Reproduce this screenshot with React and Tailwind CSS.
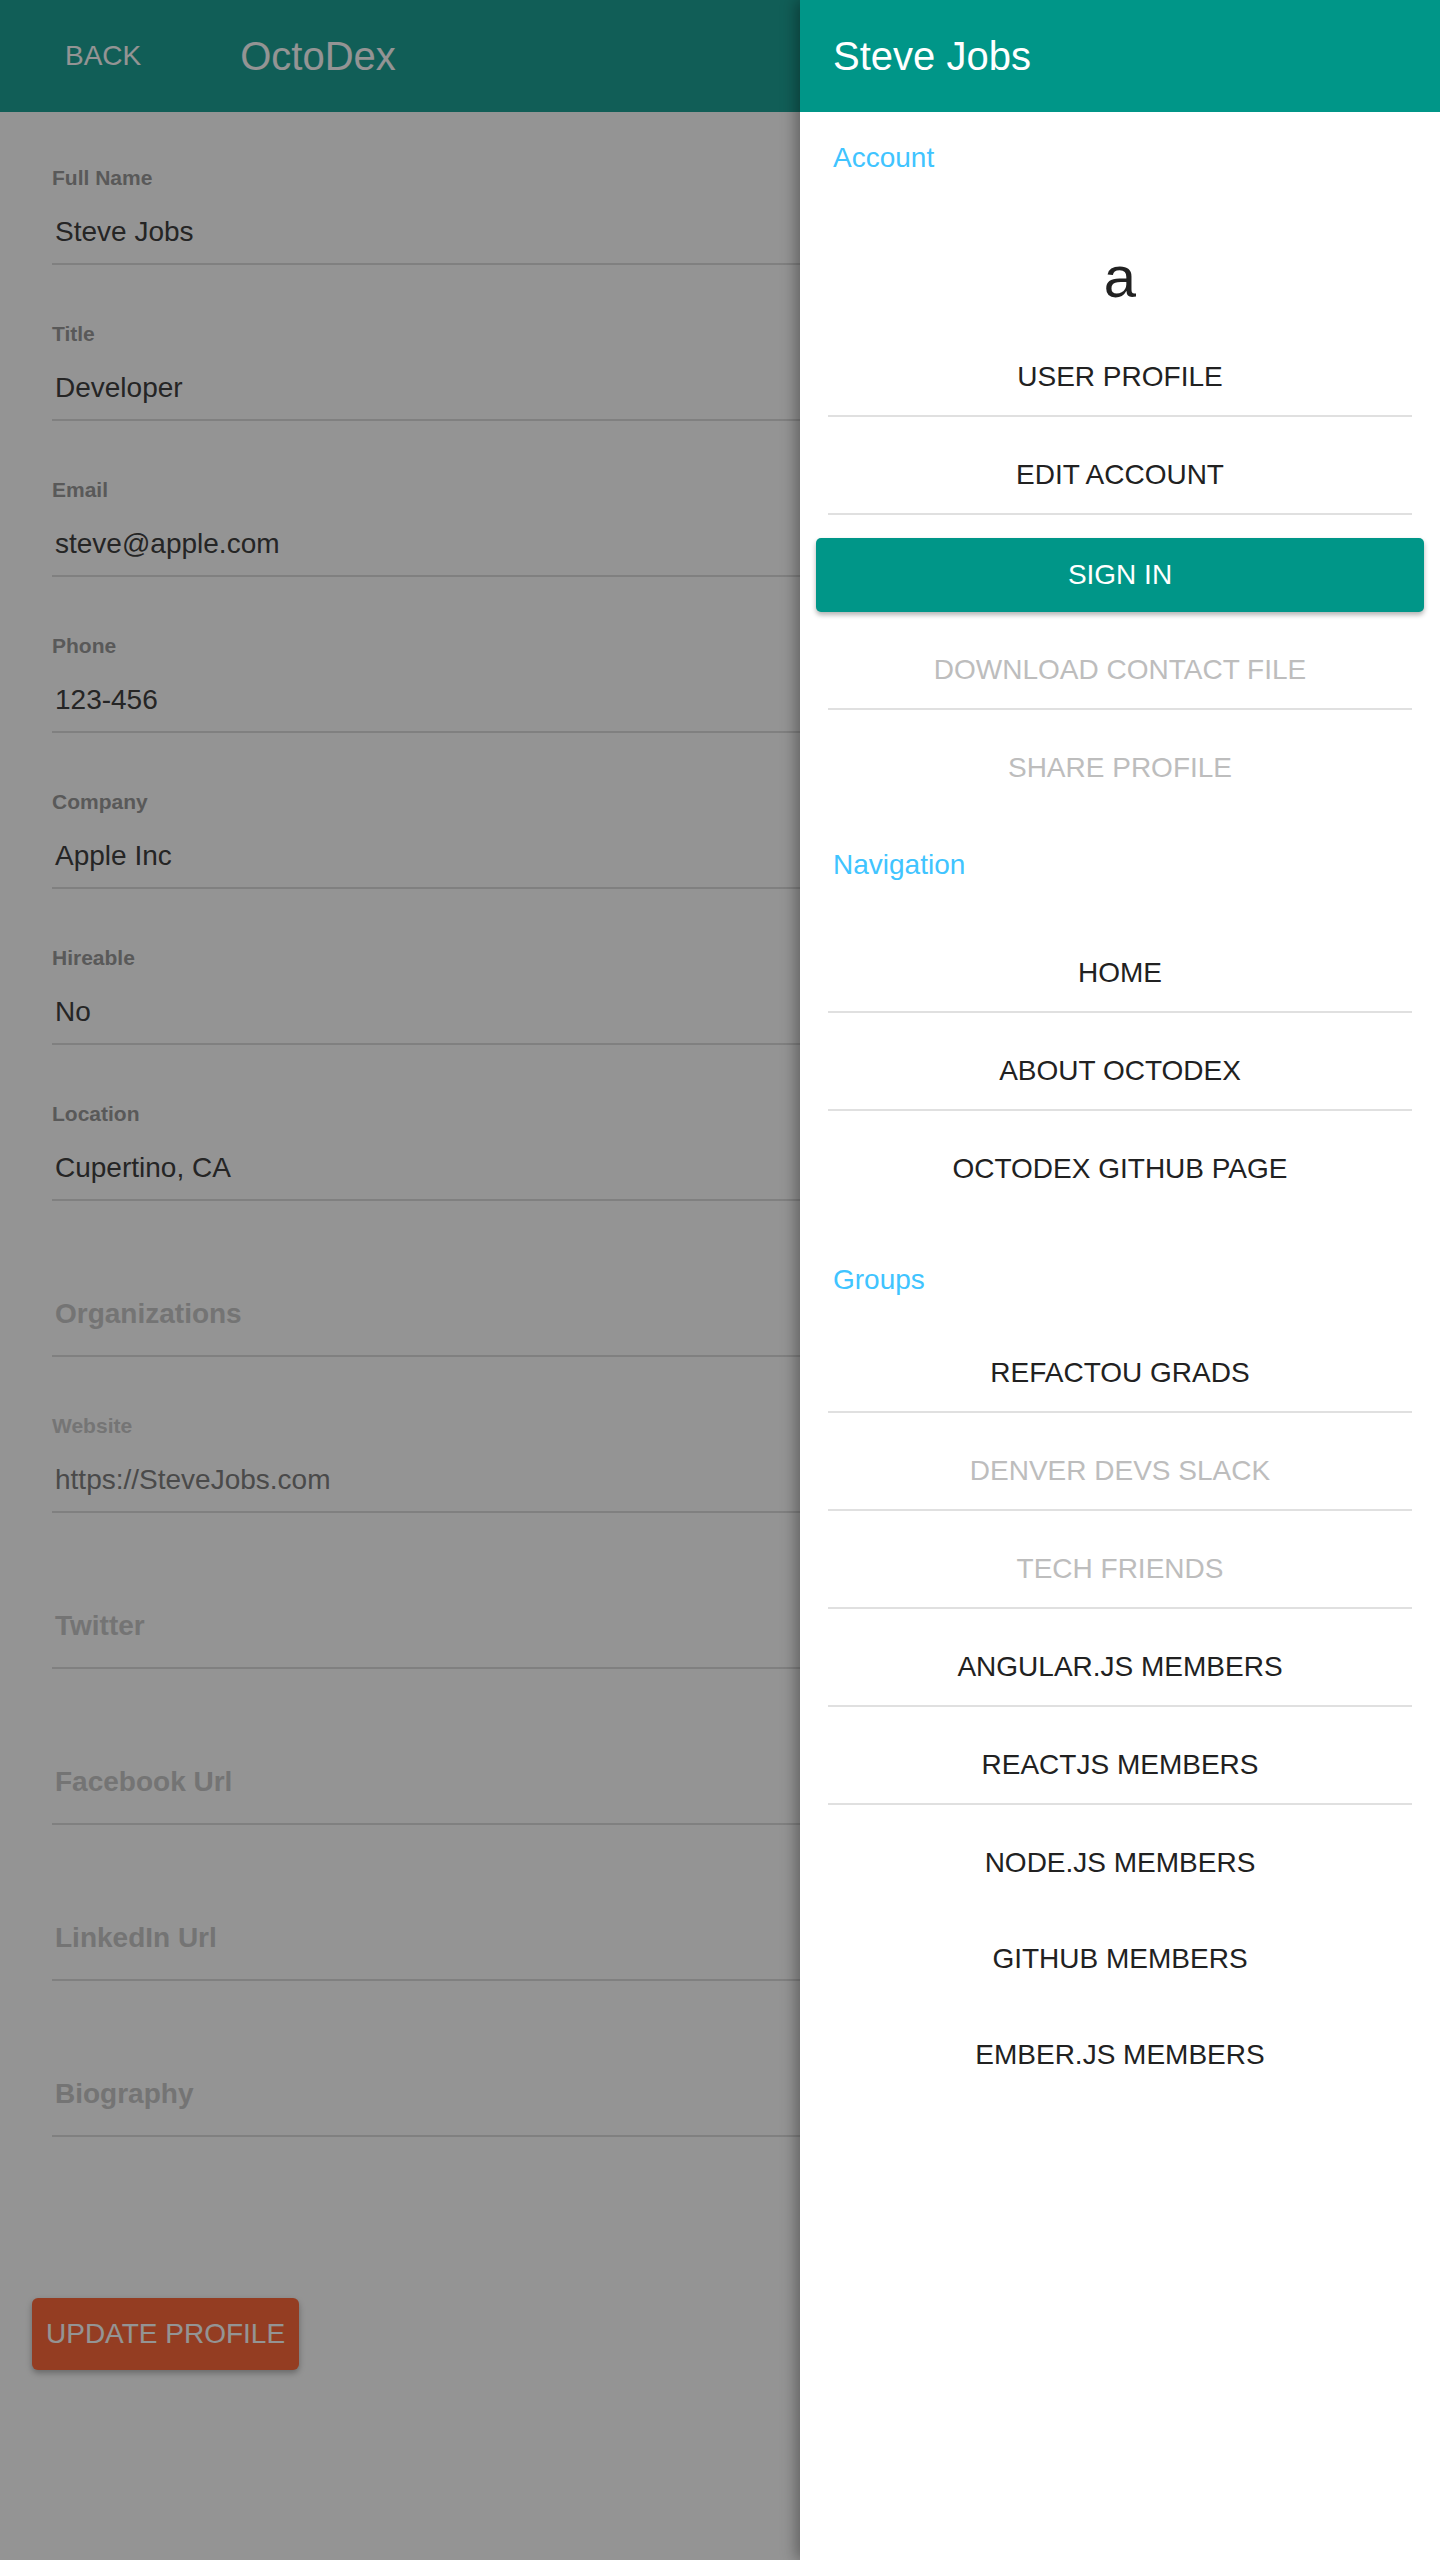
import React from "react";

const fields = [
  { label: "Full Name", value: "Steve Jobs" },
  { label: "Title", value: "Developer" },
  { label: "Email", value: "steve@apple.com" },
  { label: "Phone", value: "123-456" },
  { label: "Company", value: "Apple Inc" },
  { label: "Hireable", value: "No" },
  { label: "Location", value: "Cupertino, CA" },
  { placeholder: "Organizations" },
  { label: "Website", value: "https://SteveJobs.com", muted: true },
  { placeholder: "Twitter" },
  { placeholder: "Facebook Url" },
  { placeholder: "LinkedIn Url" },
  { placeholder: "Biography" },
];

function Field({ f }) {
  return (
    <div className="h-[156px] flex flex-col justify-end">
      {f.placeholder ? (
        <div className="pl-[3px] mb-[25px] text-[28px] leading-[32px] font-bold text-[#c8c8c8]">
          {f.placeholder}
        </div>
      ) : (
        <>
          <div
            className={
              "text-[21px] leading-[24px] font-bold " +
              (f.muted ? "text-[#cacaca]" : "text-[#9a9a9a]")
            }
          >
            {f.label}
          </div>
          <div
            className={
              "mt-[26px] mb-[15px] pl-[3px] text-[28px] leading-[32px] " +
              (f.muted ? "text-[#808080]" : "text-[#404040]")
            }
          >
            {f.value}
          </div>
        </>
      )}
      <div className="h-[2px] bg-[#dcdcdc]" />
    </div>
  );
}

function Item({ children, disabled, divider }) {
  return (
    <>
      <div
        className={
          "mt-[20px] h-[76px] flex items-center justify-center text-[28px] leading-[32px] uppercase " +
          (disabled ? "text-[#bdbdbd]" : "text-[#212121]")
        }
      >
        {children}
      </div>
      {divider && <div className="mx-[28px] h-[2px] bg-[#e0e0e0]" />}
    </>
  );
}

export default function App() {
  return (
    <div className="relative w-[1440px] h-[2560px] overflow-hidden bg-white font-['Liberation_Sans',Arial,sans-serif]">
      {/* underlying page */}
      <div className="flex flex-col">
        <header className="h-[112px] bg-[#1ea297] flex items-center text-white">
          <span className="ml-[65px] text-[28px] leading-[32px]">BACK</span>
          <span className="ml-[99px] text-[40px] leading-[44px]">OctoDex</span>
        </header>
        <div className="-mt-[3px] pl-[52px] flex flex-col">
          {fields.map((f, i) => (
            <Field key={i} f={f} />
          ))}
        </div>
        <div className="mt-[161px] ml-[32px]">
          <button className="h-[72px] px-[14px] rounded-[6px] bg-[#ff6a3c] text-white text-[28px] leading-[32px] shadow-[0_3px_6px_rgba(0,0,0,0.3)]">
            UPDATE PROFILE
          </button>
        </div>
      </div>

      {/* backdrop */}
      <div className="absolute inset-0 bg-black/[0.42]" />

      {/* drawer */}
      <aside className="absolute top-0 right-0 w-[640px] h-[2560px] bg-white shadow-[-4px_0_14px_rgba(0,0,0,0.35)] flex flex-col">
        <div className="h-[112px] shrink-0 bg-[#009688] flex items-center pl-[33px] text-white text-[40px] leading-[44px]">
          Steve Jobs
        </div>

        <div className="h-[136px] pt-[30px] pl-[33px] text-[28px] leading-[32px] text-[#40c4ff]">
          Account
        </div>
        <div className="h-[71px] text-center text-[58px] leading-[58px] text-[#212121]">a</div>
        <Item divider>User Profile</Item>
        <Item divider>Edit Account</Item>
        <div className="mt-[23px] mx-[16px] h-[74px] rounded-[5px] bg-[#009688] flex items-center justify-center text-white text-[28px] leading-[32px] shadow-[0_3px_5px_rgba(0,0,0,0.3)]">
          SIGN IN
        </div>
        <Item disabled divider>Download Contact File</Item>
        <Item disabled>Share Profile</Item>

        <div className="h-[109px] pt-[43px] pl-[33px] text-[28px] leading-[32px] text-[#40c4ff]">
          Navigation
        </div>
        <Item divider>Home</Item>
        <Item divider>About OctoDex</Item>
        <Item>OctoDex GitHub Page</Item>

        <div className="h-[108px] pt-[57px] pl-[33px] text-[28px] leading-[32px] text-[#40c4ff]">
          Groups
        </div>
        <Item divider>Refactou Grads</Item>
        <Item disabled divider>Denver Devs Slack</Item>
        <Item disabled divider>Tech Friends</Item>
        <Item divider>Angular.js Members</Item>
        <Item divider>ReactJS Members</Item>
        <Item>Node.js Members</Item>
        <Item>GitHub Members</Item>
        <Item>Ember.js Members</Item>
      </aside>
    </div>
  );
}
